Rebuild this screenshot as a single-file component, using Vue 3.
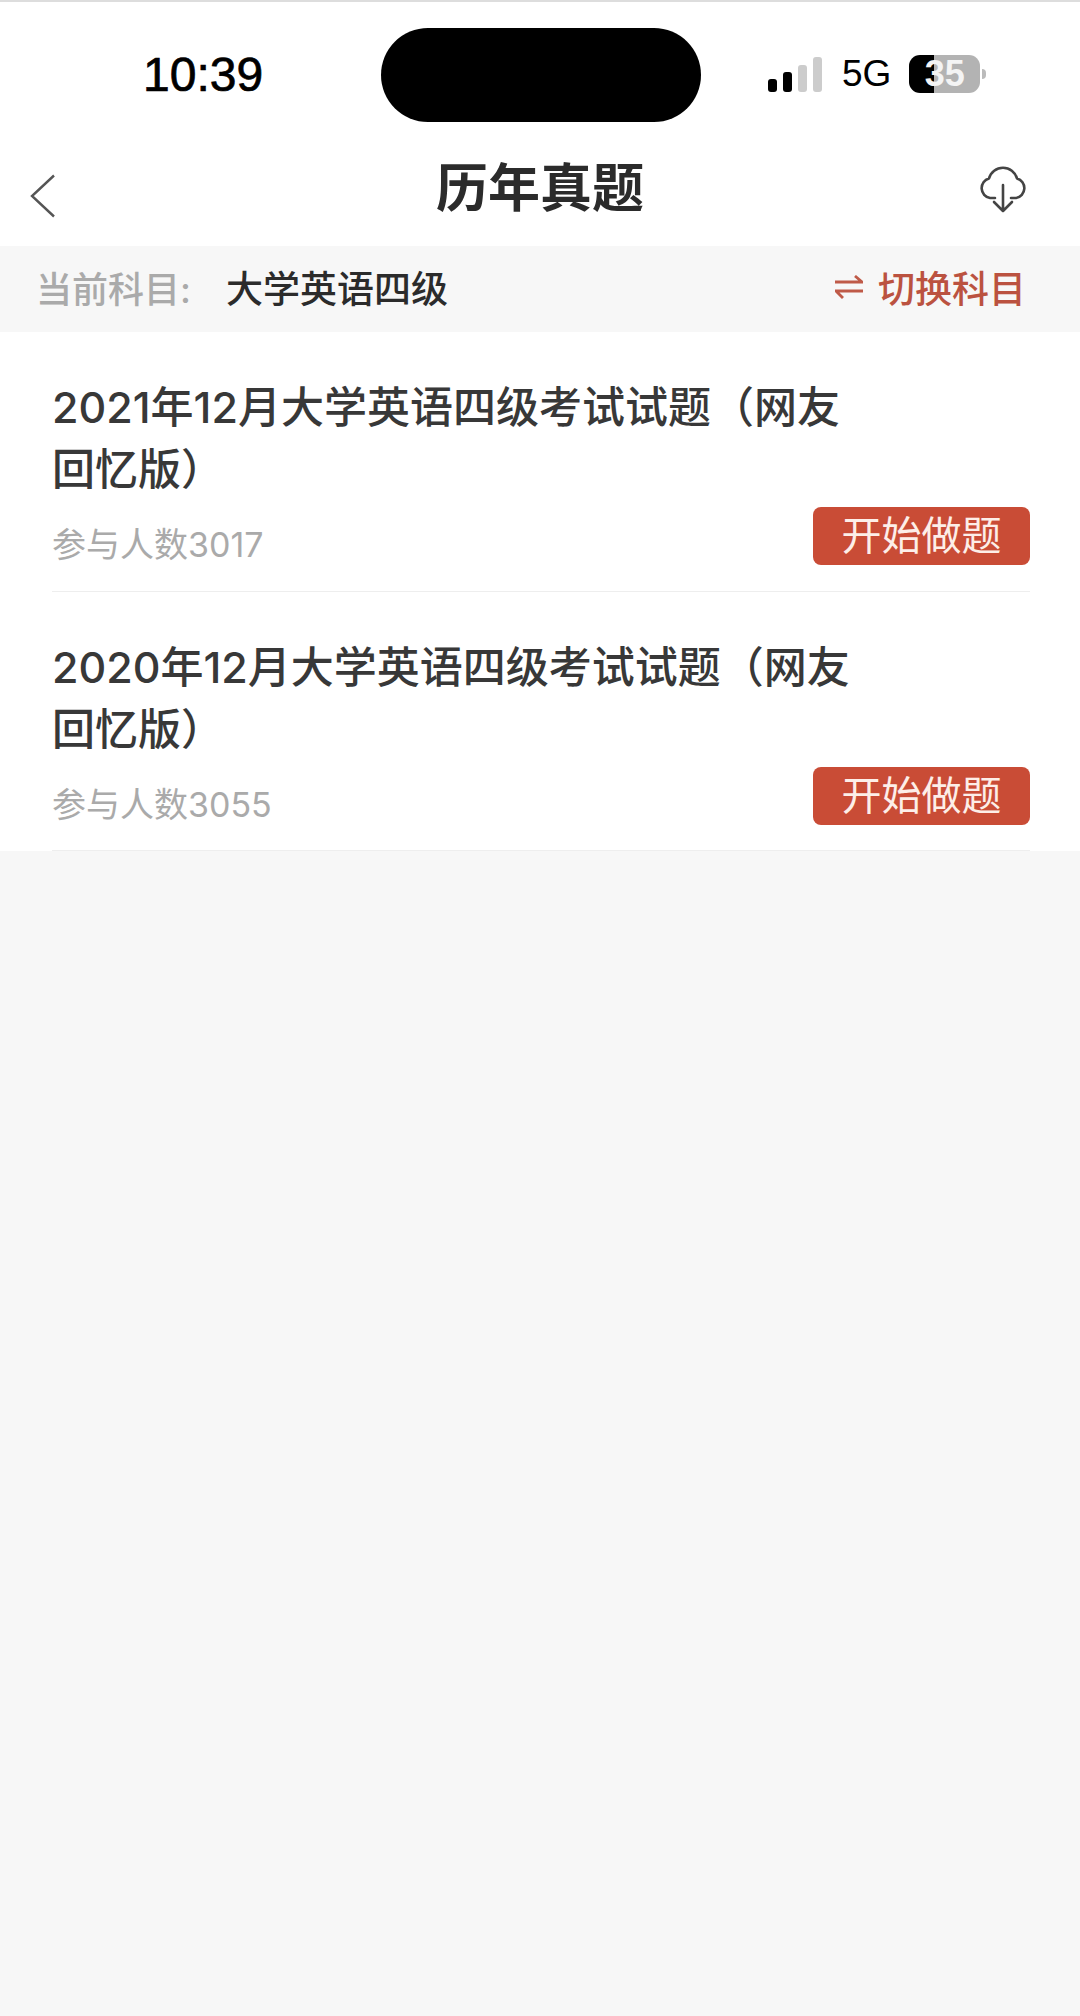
<template>
  <div class="page">
    <div class="status-bar">
      <div class="status-left">
        <span class="time">10:39</span>
      </div>
      <div class="island"></div>
      <div class="status-right">
        <div class="signal">
          <span class="bar bar1"></span>
          <span class="bar bar2"></span>
          <span class="bar bar3 off"></span>
          <span class="bar bar4 off"></span>
        </div>
        <span class="net">5G</span>
        <div class="battery">
          <div class="battery-body"><span>35</span></div>
          <span class="battery-nub"></span>
        </div>
      </div>
    </div>

    <div class="nav">
      <div class="nav-left">
        <svg class="back" width="25" height="44" viewBox="0 0 25 44" fill="none">
          <path d="M24 1.5 L2 22 L24 42.5" stroke="#555" stroke-width="2.4" />
        </svg>
      </div>
      <h1 class="title">历年真题</h1>
      <div class="nav-right">
        <svg class="cloud" width="50" height="48" viewBox="-1 -1 50 48" fill="none" stroke="#444" stroke-width="2.6" stroke-linecap="round" stroke-linejoin="round">
          <path d="M16 32 H11 A10 10 0 0 1 10 12.5 A14.5 14.5 0 0 1 38 12.5 A10 10 0 0 1 37 32 H32" />
          <path d="M24 19 V45 M15 36 L24 45 L33 36" />
        </svg>
      </div>
    </div>

    <div class="subject">
      <span class="subject-label">当前科目:</span>
      <span class="subject-name">大学英语四级</span>
      <div class="switch">
        <svg width="28" height="24" viewBox="0 0 28 24" fill="none" stroke="#bf5a48" stroke-width="2.8">
          <path d="M0 7 H27 L20 1" />
          <path d="M28 16 H1 L8 23" />
        </svg>
        <span>切换科目</span>
      </div>
    </div>

    <div class="list">
      <div v-for="item in papers" :key="item.title" class="item">
        <div class="item-title">{{ item.title }}</div>
        <div class="item-row">
          <span class="count">参与人数{{ item.count }}</span>
          <button class="start" type="button">开始做题</button>
        </div>
      </div>
    </div>
  </div>
</template>

<script setup>
const papers = [
  { title: '2021年12月大学英语四级考试试题（网友回忆版）', count: 3017 },
  { title: '2020年12月大学英语四级考试试题（网友回忆版）', count: 3055 }
]
</script>

<style>
html,
body {
  margin: 0;
  background: #f7f7f7;
}
</style>

<style scoped>
.page {
  min-height: 2016px;
  background: #f7f7f7;
  font-family: Inter, "Noto Sans CJK SC", sans-serif;
  color: #333;
}

.status-bar {
  display: flex;
  align-items: center;
  height: 122px;
  box-sizing: border-box;
  background: #fff;
  border-top: 2px solid #ddd;
}

.status-left {
  width: 381px;
  margin-top: 24px;
  box-sizing: border-box;
  padding-left: 143px;
}

.time {
  font-family: "Liberation Sans", sans-serif;
  font-size: 48px;
  font-weight: 400;
  -webkit-text-stroke: 0.7px #000;
  color: #000;
}

.island {
  width: 320px;
  height: 94px;
  margin-top: 26px;
  background: #000;
  border-radius: 47px;
}

.status-right {
  display: flex;
  align-items: center;
  margin-top: 24px;
  padding-left: 67px;
}

.signal {
  display: flex;
  align-items: flex-end;
  gap: 6px;
  height: 35px;
}

.bar {
  width: 9px;
  background: #000;
  border-radius: 3px;
}

.bar1 {
  height: 13px;
}

.bar2 {
  height: 20px;
}

.bar3 {
  height: 27px;
}

.bar4 {
  height: 35px;
}

.bar.off {
  background: #ccc;
}

.net {
  margin-left: 20px;
  font-family: "Liberation Sans", sans-serif;
  font-size: 37px;
  color: #000;
}

.battery {
  display: flex;
  align-items: center;
  margin-left: 18px;
}

.battery-body {
  width: 71px;
  height: 38px;
  border-radius: 11px;
  background: linear-gradient(90deg, #000 35%, #b3b3b3 35%);
  color: #f4f4f4;
  font-family: "Liberation Sans", sans-serif;
  font-size: 36px;
  font-weight: 700;
  line-height: 38px;
  text-align: center;
}

.battery-nub {
  width: 4px;
  height: 10px;
  margin-left: 2px;
  background: #bbb;
  border-radius: 0 5px 5px 0;
}

.nav {
  display: grid;
  grid-template-columns: 1fr auto 1fr;
  align-items: center;
  height: 124px;
  padding: 0 30px;
  box-sizing: border-box;
  background: #fff;
}

.back {
  display: block;
  margin-top: 24px;
}

.title {
  margin: 0;
  font-size: 52px;
  font-weight: 700;
  color: #2b2b2b;
}

.nav-right {
  display: flex;
  justify-content: flex-end;
  padding-right: 22px;
}

.cloud {
  display: block;
  margin-top: 10px;
}

.subject {
  display: flex;
  align-items: center;
  height: 86px;
  padding: 0 54px 4px 36px;
  box-sizing: border-box;
  font-size: 36px;
  font-weight: 500;
  background: #f7f7f7;
}

.subject-label {
  width: 190px;
  color: #aaa;
}

.subject-name {
  font-size: 37px;
  color: #2b2b2b;
}

.switch {
  display: flex;
  align-items: center;
  gap: 15px;
  margin-left: auto;
  font-size: 37px;
  color: #bb5240;
}

.switch svg {
  display: block;
}

.list {
  background: #fff;
  padding: 0 50px 0 52px;
}

.item {
  height: 260px;
  padding-top: 44px;
  box-sizing: border-box;
  border-bottom: 1px solid #eee;
}

.item + .item {
  height: 259px;
}

.item-title {
  width: 810px;
  font-size: 43px;
  font-weight: 500;
  line-height: 62px;
  color: #383838;
}

.item-row {
  display: flex;
  align-items: center;
  justify-content: space-between;
  margin-top: 4px;
}

.count {
  margin-top: 14px;
  font-size: 34px;
  color: #aaa;
}

.start {
  width: 217px;
  height: 58px;
  padding: 0;
  border: none;
  border-radius: 8px;
  background: #c94c36;
  color: #fdeee8;
  font-family: inherit;
  font-size: 40px;
  line-height: 58px;
}
</style>
